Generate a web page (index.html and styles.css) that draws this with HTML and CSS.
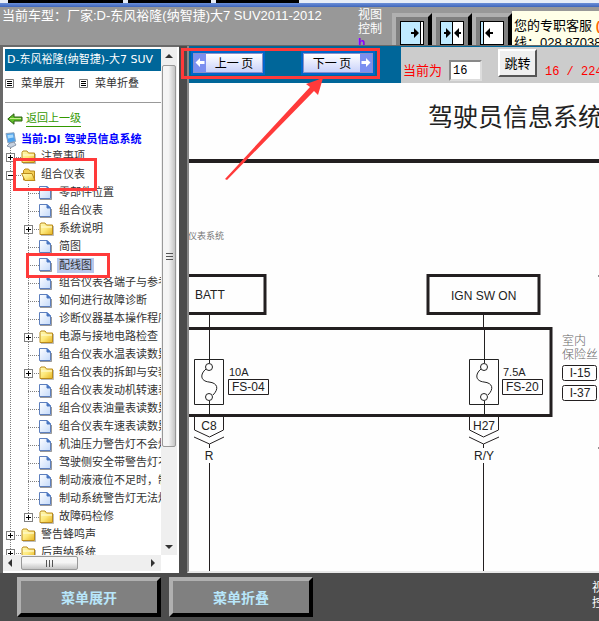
FILE: index.html
```html
<!DOCTYPE html>
<html lang="zh-CN">
<head>
<meta charset="utf-8">
<title>驾驶员信息系统</title>
<link rel="stylesheet" href="styles.css">
</head>
<body>
<svg class="defs" aria-hidden="true">
  <defs>
    <linearGradient id="gold" x1="0" y1="0" x2="1" y2="1"><stop offset="0" stop-color="#fffbb8"/><stop offset=".5" stop-color="#fde87a"/><stop offset="1" stop-color="#e6b422"/></linearGradient>
    <linearGradient id="paper" x1="0" y1="0" x2="1" y2="1"><stop offset="0" stop-color="#ffffff"/><stop offset="1" stop-color="#c4dafa"/></linearGradient>
    <symbol id="folder" viewBox="0 0 16 14"><path d="M1 12.500V2.500L2 1h4l1.500 2H13.500V12.500Z" fill="url(#gold)" stroke="#b98a1c"/><path d="M2 5h11" stroke="#fffde0"/><path d="M14.500 4v9.500H2" fill="none" stroke="#777" stroke-opacity=".5"/></symbol>
    <symbol id="folder-open" viewBox="0 0 16 14"><path d="M2.500 12V2.500L4 1h3.500L9 3h4.500v9Z" fill="#f3cf55" stroke="#b98a1c"/><path d="M.600 5.500H11L14 12.500H4Z" fill="url(#gold)" stroke="#b98a1c"/></symbol>
    <symbol id="doc" viewBox="0 0 13 14"><path d="M.500.500H8L11.500 4v8.500H.500Z" fill="url(#paper)" stroke="#5d7fbd"/><path d="M8 .500V4h3.500Z" fill="#4977c2" stroke="#4977c2"/><path d="M1 13.500H12.500V5" fill="none" stroke="#555" stroke-opacity=".6"/></symbol>
    <symbol id="list" viewBox="0 0 9 9"><path d="M.500.500h8v8h-8Z" fill="#fff" stroke="#777"/><path d="M2 2.500h5M2 4.500h5M2 6.500h5" stroke="#000"/></symbol>
    <symbol id="back-arrow" viewBox="0 0 16 12"><path d="M.800 6 7 .800V4H15V8H7v3.200Z" fill="#62c32a" stroke="#2b5f12"/><path d="M3 5.500h11" stroke="#c8f08e"/></symbol>
    <symbol id="computer" viewBox="0 0 12 16"><path d="M1 1.500 9 .800 10.500 9.500 3 11Z" fill="#4da3ee" stroke="#8aa3bd"/><path d="M2.500 3 8 2.500l.500 3-5.500 1Z" fill="#a8dafd"/><path d="M5 11 9 10l2 3-5 2.500-4-1.500Z" fill="#c7d2e0" stroke="#8794a8"/></symbol>
    <symbol id="go-left" viewBox="0 0 12 18"><path d="M0 0h12v18H0Z" fill="#7b8ff0"/><path d="M1.500 8.500 6 4v3h4.500v3H6v3Z" fill="#fff"/></symbol>
    <symbol id="go-right" viewBox="0 0 12 18"><path d="M0 0h12v18H0Z" fill="#7b8ff0"/><path d="M10.500 8.500 6 4v3H1.500v3H6v3Z" fill="#fff"/></symbol>
    <symbol id="fuse" viewBox="0 0 30 92"><path d="M.500 17.500h29v45h-29Z M15.500 0v21M15.500 59v14" fill="none" stroke="#222" stroke-width="1"/><circle cx="15" cy="25" r="3.500"/><circle cx="15" cy="55" r="3.500"/><path d="M12 27C6 32 6 39 15 40s10 7 4 13" fill="none" stroke="#222"/></symbol>
  </defs>
</svg>

<div class="tabs"></div>
<header class="top">
  <p class="vehicle">当前车型：厂家:D-东风裕隆(纳智捷)大7 SUV2011-2012</p>
  <p class="view-label">视图<br>控制<br><span class="tip">h.</span></p>
  <div class="views">
    <button type="button" aria-label="左栏展开"><svg width="24" height="24" viewBox="0 0 24 24"><path d="M0 0h24v24H0Z" fill="#000"/><path d="M1 1h19v22H1Z" fill="#bfeaff"/><path d="M21 1h2v22h-2Z" fill="#fff"/><path d="M11 11h3V7l5 5-5 5v-4h-3Z"/></svg></button>
    <button type="button" aria-label="平分"><svg width="24" height="24" viewBox="0 0 24 24"><path d="M0 0h24v24H0Z"/><path d="M1 1h11v22H1Z" fill="#bfeaff"/><path d="M13 1h10v22H13Z" fill="#fff"/><path d="M4 11h2V7l5 5-5 5v-4H4ZM21 11h-2V7l-5 5 5 5v-4h2Z"/></svg></button>
    <button type="button" aria-label="左栏收起"><svg width="24" height="24" viewBox="0 0 24 24"><path d="M0 0h24v24H0Z"/><path d="M1 1h2v22H1Z" fill="#bfeaff"/><path d="M4 1h19v22H4Z" fill="#fff"/><path d="M13 11h-3V7l-5 5 5 5v-4h3Z"/></svg></button>
  </div>
  <p class="service">您的专职客服 <b>(热</b><br>线：028 87038</p>
</header>

<div class="middle">
  <aside class="side">
    <nav class="pane">
      <h1 class="title">D-东风裕隆(纳智捷)-大7 SUV</h1>
      <div class="actions">
        <a href="#open"><svg width="9" height="9"><use href="#list"/></svg>菜单展开</a>
        <a href="#close"><svg width="9" height="9"><use href="#list"/></svg>菜单折叠</a>
      </div>
      <a class="back" href="#up"><svg width="16" height="12"><use href="#back-arrow"/></svg><span>返回上一级</span></a>
      <p class="current"><svg width="12" height="16"><use href="#computer"/></svg>当前:DI 驾驶员信息系统</p>
      <ul class="tree">
        <li><div class="row"><span class="slot"><i class="plus"></i></span><svg class="ico"><use href="#folder" width="16" height="14"/></svg>注意事项</div></li>
        <li><div class="row"><span class="slot"><i></i></span><svg class="ico"><use href="#folder-open" width="16" height="14"/></svg>组合仪表</div>
          <ul>
            <li class="row"><span class="slot"></span><svg class="ico"><use href="#doc" width="13" height="14"/></svg>零部件位置</li>
            <li class="row"><span class="slot"></span><svg class="ico"><use href="#doc" width="13" height="14"/></svg>组合仪表</li>
            <li class="row"><span class="slot"><i class="plus"></i></span><svg class="ico"><use href="#folder" width="16" height="14"/></svg>系统说明</li>
            <li class="row"><span class="slot"></span><svg class="ico"><use href="#doc" width="13" height="14"/></svg>简图</li>
            <li class="row"><span class="slot"></span><svg class="ico"><use href="#doc" width="13" height="14"/></svg><span class="picked">配线图</span></li>
            <li class="row"><span class="slot"></span><svg class="ico"><use href="#doc" width="13" height="14"/></svg>组合仪表各端子与参考</li>
            <li class="row"><span class="slot"></span><svg class="ico"><use href="#doc" width="13" height="14"/></svg>如何进行故障诊断</li>
            <li class="row"><span class="slot"></span><svg class="ico"><use href="#doc" width="13" height="14"/></svg>诊断仪器基本操作程序</li>
            <li class="row"><span class="slot"><i class="plus"></i></span><svg class="ico"><use href="#folder" width="16" height="14"/></svg>电源与接地电路检查</li>
            <li class="row"><span class="slot"></span><svg class="ico"><use href="#doc" width="13" height="14"/></svg>组合仪表水温表读数异</li>
            <li class="row"><span class="slot"><i class="plus"></i></span><svg class="ico"><use href="#folder" width="16" height="14"/></svg>组合仪表的拆卸与安装</li>
            <li class="row"><span class="slot"></span><svg class="ico"><use href="#doc" width="13" height="14"/></svg>组合仪表发动机转速表</li>
            <li class="row"><span class="slot"></span><svg class="ico"><use href="#doc" width="13" height="14"/></svg>组合仪表油量表读数异</li>
            <li class="row"><span class="slot"></span><svg class="ico"><use href="#doc" width="13" height="14"/></svg>组合仪表车速表读数异</li>
            <li class="row"><span class="slot"></span><svg class="ico"><use href="#doc" width="13" height="14"/></svg>机油压力警告灯不会熄</li>
            <li class="row"><span class="slot"></span><svg class="ico"><use href="#doc" width="13" height="14"/></svg>驾驶侧安全带警告灯不</li>
            <li class="row"><span class="slot"></span><svg class="ico"><use href="#doc" width="13" height="14"/></svg>制动液液位不足时，制</li>
            <li class="row"><span class="slot"></span><svg class="ico"><use href="#doc" width="13" height="14"/></svg>制动系统警告灯无法熄</li>
            <li class="row"><span class="slot"><i class="plus"></i></span><svg class="ico"><use href="#folder" width="16" height="14"/></svg>故障码检修</li>
          </ul>
        </li>
        <li><div class="row"><span class="slot"><i class="plus"></i></span><svg class="ico"><use href="#folder" width="16" height="14"/></svg>警告蜂鸣声</div></li>
        <li><div class="row"><span class="slot"><i class="plus"></i></span><svg class="ico"><use href="#folder" width="16" height="14"/></svg>后声纳系统</div></li>
      </ul>
    </nav>
    <div class="vbar">
      <svg width="16" height="18" viewBox="0 0 16 18"><path d="M4 11 8 7l4 4Z" fill="#333"/></svg>
      <div class="vthumb"><span></span><span></span><span></span></div>
      <svg class="end" width="16" height="18" viewBox="0 0 16 18"><path d="M4 8h8l-4 4Z" fill="#333"/></svg>
    </div>
    <div class="hbar">
      <svg width="18" height="14" viewBox="0 0 18 14"><path d="M9 3v8L5 7Z" fill="#333"/></svg>
      <div class="hthumb"><span></span><span></span><span></span></div>
      <svg class="end" width="18" height="14" viewBox="0 0 18 14"><path d="M8 3v8l4-4Z" fill="#333"/></svg>
    </div>
  </aside>

  <main class="main">
    <div class="toolbar">
      <div class="pager">
        <button type="button" class="page"><svg width="12" height="18"><use href="#go-left"/></svg><span>上一 页</span></button>
        <button type="button" class="page"><span>下一 页</span><svg width="12" height="18"><use href="#go-right"/></svg></button>
      </div>
      <form class="jump">
        <label for="page-no">当前为</label>
        <input id="page-no" type="text" value="16">
        <button type="button">跳转</button>
        <span class="count">16 / 224</span>
      </form>
    </div>
    <div class="sheet">
      <svg width="600" height="488" viewBox="189 83 600 488" role="img" aria-label="配线图">
        <text x="428" y="126" font-size="25" class="cjk">驾驶员信息系统</text>
        <path d="M189 161h600" class="line" stroke-width="4"/>
        <text x="188" y="239" font-size="9" class="cjk faint">仪表系统</text>
        <path d="M180 275.500h85v38h-85" class="line" stroke-width="3"/>
        <path d="M428 275.500h111v38H428Z" class="line" stroke-width="3"/>
        <path d="M180 328.500h371v87H180" class="line" stroke-width="3"/>
        <path d="M209.500 315v14M483.500 315v14" class="line"/>
        <text x="195" y="299" font-size="12">BATT</text>
        <text x="451" y="300" font-size="12">IGN SW ON</text>
        <use href="#fuse" x="194" y="342" width="30" height="92"/>
        <use href="#fuse" x="469" y="342" width="30" height="92"/>
        <path d="M209.500 329v14M484.500 329v14" class="line"/>
        <text x="229" y="376" font-size="11">10A</text>
        <text x="503" y="376" font-size="11">7.5A</text>
        <path d="M228.500 379.500h40v15h-40ZM502.500 379.500h40v15h-40Z" class="line"/>
        <text x="232" y="391" font-size="12">FS-04</text>
        <text x="506" y="391" font-size="12">FS-20</text>
        <path d="M194.500 417v13l15 7 14-7V417M194 437l15.500 7 14.500-7M209.500 444v4" class="line"/>
        <path d="M469.500 417v13l14 7 15-7V417M469 437l14.500 7 15.500-7M483.500 444v4" class="line"/>
        <path d="M209.500 463V575M483.500 463V575" class="line"/>
        <text x="209" y="430" font-size="12" text-anchor="middle">C8</text>
        <text x="484" y="430" font-size="12" text-anchor="middle">H27</text>
        <text x="209" y="460" font-size="12" text-anchor="middle">R</text>
        <text x="484" y="460" font-size="12" text-anchor="middle">R/Y</text>
        <text x="562" y="345" font-size="12" class="cjk light">室内</text>
        <text x="562" y="359" font-size="12" class="cjk light">保险丝</text>
        <rect x="562.500" y="365.500" width="34" height="15" rx="2" class="line"/>
        <rect x="562.500" y="385.500" width="34" height="15" rx="2" class="line"/>
        <text x="580" y="377" font-size="12" text-anchor="middle">I-15</text>
        <text x="580" y="397" font-size="12" text-anchor="middle">I-37</text>
        <path d="M598 276h5M598 448h5" class="line"/>
      </svg>
    </div>
  </main>
</div>

<footer class="foot">
  <button type="button">菜单展开</button>
  <button type="button">菜单折叠</button>
  <p>视图<br>控制</p>
</footer>

<svg class="marks" width="400" height="300" viewBox="0 0 400 300" aria-hidden="true">
  <path d="M182.500 49.500h196v28h-196ZM14.500 159.500h81v30h-81ZM27.500 254.500h81v22h-81Z" fill="none" stroke="#ff3a3a" stroke-width="3"/>
  <path d="M323 78 306 84l4 3L225 179l2 1 87-89 4 4Z" fill="#ff3a3a"/>
</svg>
</body>
</html>
```
FILE: styles.css
```css
* { box-sizing: border-box; }
body {
  margin: 0;
  height: 100vh;
  display: flex;
  flex-direction: column;
  overflow: hidden;
  position: relative;
  background: #4c4c4c;
  color: #333;
  font: 11px/18px "DejaVu Sans", "Noto Sans CJK SC", sans-serif;
}
p, h1, ul { margin: 0; padding: 0; }
ul { list-style: none; }
svg { display: block; flex: none; }
button { font-family: inherit; padding: 0; }
.defs { position: absolute; width: 0; height: 0; }

.tabs {
  flex: 0 0 7px;
  background:
    linear-gradient(#000, #000) 8px 0 / 115px 3px no-repeat,
    linear-gradient(#000, #000) 128px 0 / 83px 3px no-repeat,
    linear-gradient(#000, #000) 216px 0 / 83px 3px no-repeat,
    linear-gradient(#e8eef8 0 3px, #6b8fd8 3px, #3f66bb);
}
.top {
  flex: 0 0 39px;
  display: flex;
  overflow: hidden;
  background: #989898;
  color: #fff;
  font: 13px/15px "Liberation Sans", "Noto Sans CJK SC", sans-serif;
  white-space: nowrap;
  border-bottom: 1px solid #696969;
}
.vehicle { flex: 0 0 356px; padding-left: 2px; line-height: 18px; }
.view-label { flex: 0 0 36px; padding: 1px 0 0 2px; font-size: 12px; line-height: 14px; }
.tip { color: #80f; font-weight: bold; }
.views { display: flex; padding-top: 6px; }
.views button {
  width: 40px;
  height: 40px;
  padding: 4px;
  background: #808080;
  border: 4px solid #b0b0b0;
  border-right-color: #000;
  border-bottom-color: #000;
}
.service {
  flex: 1;
  margin-top: 4px;
  padding: 6px 0 0 2px;
  overflow: hidden;
  background: #ffffe8;
  color: #000;
  line-height: 17px;
}
.service b { color: #f60; }

.middle { flex: 1; min-height: 0; display: flex; gap: 8px; }

.side {
  flex: 0 0 179px;
  display: grid;
  grid-template: minmax(0, 1fr) 16px / minmax(0, 1fr) 16px;
  padding: 0 2px 2px 0;
  background: #fff;
  border: solid #696969;
  border-width: 1px 0 0 3px;
}
.pane { overflow: hidden; padding: 2px 0 0 2px; white-space: nowrap; }
.title {
  padding-left: 2px;
  overflow: hidden;
  background: #069;
  color: #fff;
  font-size: 11px;
  font-weight: normal;
  line-height: 22px;
}
.actions {
  display: flex;
  gap: 14px;
  height: 32px;
  padding-bottom: 6px;
  border-bottom: 1px solid #999;
}
.actions a { display: flex; align-items: center; gap: 7px; color: #333; text-decoration: none; }
.back { display: flex; align-items: center; gap: 3px; height: 26px; padding: 6px 0 0 2px; color: #390; text-decoration: none; }
.back span { line-height: 15px; border-bottom: 1px solid #390; }
.current { display: flex; align-items: center; gap: 4px; height: 19px; padding-top: 2px; color: #00f; font-weight: bold; }

.tree, .tree ul {
  background: repeating-linear-gradient(#808080 0 1px, transparent 1px 2px) 5px 0 / 1px 100% no-repeat;
}
.tree ul { margin-left: 18px; background-size: 1px calc(100% - 9px); }
.row { display: flex; align-items: center; height: 18px; }
.slot {
  flex: 0 0 16px;
  height: 9px;
  padding-left: 1px;
  background: repeating-linear-gradient(90deg, #808080 0 1px, transparent 1px 2px) 5px 4px / 11px 1px no-repeat;
}
.slot i {
  display: block;
  width: 9px;
  height: 9px;
  border: 1px solid #808080;
  background: linear-gradient(#000, #000) 1px 3px / 5px 1px no-repeat, #fff;
}
.slot .plus {
  background:
    linear-gradient(#000, #000) 1px 3px / 5px 1px no-repeat,
    linear-gradient(#000, #000) 3px 1px / 1px 5px no-repeat,
    #fff;
}
.ico { width: 20px; height: 14px; }
.picked { line-height: 15px; padding: 0 2px; margin-left: -2px; background: #b8c8ec; }

.vbar { display: flex; flex-direction: column; background: #efefef; }
.vthumb {
  flex: 0 1 382px;
  display: flex;
  flex-direction: column;
  align-items: center;
  justify-content: center;
  gap: 2px;
  margin: 0 1px;
  border: 1px solid #999;
  border-radius: 2px;
  background: linear-gradient(90deg, #f5f5f5 45%, #c4c4c4);
}
.vthumb span { width: 7px; height: 1px; background: #555; }
.vbar .end { margin-top: auto; }
.hbar { display: flex; align-items: center; background: #efefef; }
.hthumb {
  flex: 0 0 57px;
  height: 14px;
  display: flex;
  align-items: center;
  justify-content: center;
  gap: 2px;
  border: 1px solid #999;
  border-radius: 2px;
  background: linear-gradient(#f5f5f5 45%, #c4c4c4);
}
.hthumb span { width: 1px; height: 7px; background: #555; }
.hbar .end { margin-left: auto; }

.main {
  flex: 1;
  min-width: 0;
  display: flex;
  flex-direction: column;
  border-left: 2px solid #888;
  border-bottom: 2px solid #e8e8e8;
}
.toolbar { flex: 0 0 37px; display: flex; background: #069; overflow: hidden; }
.pager { flex: 0 0 212px; display: flex; gap: 36px; padding: 5px 0 6px 2px; }
.page {
  flex: none;
  display: flex;
  align-items: center;
  width: 74px;
  height: 24px;
  padding: 1px;
  border: 2px solid #06c;
  background: linear-gradient(#fff, #c9d2fa) content-box, #8a90c8;
  color: #000;
  font: 12px/18px "Noto Sans CJK SC", sans-serif;
}
.page span { flex: 1; white-space: nowrap; }
.jump {
  flex: 1;
  min-width: 0;
  display: flex;
  align-items: flex-end;
  margin-top: 1px;
  padding: 0 0 2px 2px;
  overflow: hidden;
  background: #ccc;
  color: #f00;
  font: 13px/18px "Liberation Mono", "Noto Sans CJK SC", monospace;
  white-space: nowrap;
}
.jump label { flex: 0 0 46px; }
.jump input {
  flex: none;
  width: 33px;
  height: 21px;
  margin-right: 16px;
  padding: 0 2px;
  border: 2px inset #ddd;
  background: #fff;
  color: #000;
  font: 12px/17px "Liberation Mono", monospace;
}
.jump button {
  flex: none;
  width: 39px;
  height: 28px;
  margin: 0 8px 4px 0;
  border: 2px solid #fff;
  border-right-color: #555;
  border-bottom-color: #555;
  background: #efefef;
  color: #000;
  font: 13px/20px "Noto Sans CJK SC", sans-serif;
}
.count { font-size: 12px; }
.sheet { flex: 1; min-height: 0; overflow: hidden; background: #fefefe; }
.sheet text { fill: #222; font-family: "Liberation Sans", sans-serif; }
.sheet .cjk { font-family: "Noto Sans CJK SC", sans-serif; }
.sheet .faint { fill: #777; }
.sheet .light { fill: #666; font-weight: 300; }
.line { fill: none; stroke: #231f20; }
#fuse circle { fill: #fff; stroke: #222; }

.foot { flex: 0 0 48px; display: flex; gap: 8px; padding: 4px 0 4px 17px; background: #4c4c4c; }
.foot button {
  width: 144px;
  height: 40px;
  border: 4px solid #b0b0b0;
  border-right-color: #000;
  border-bottom-color: #000;
  background: #808080;
  color: #b8e6fa;
  font: bold 14px/20px "Noto Sans CJK SC", sans-serif;
}
.foot p {
  flex: 0 0 7px;
  margin-left: auto;
  padding-top: 4px;
  overflow: hidden;
  color: #fff;
  font-size: 12px;
  line-height: 15px;
  white-space: nowrap;
}
.marks { position: absolute; left: 0; top: 0; pointer-events: none; }
```
